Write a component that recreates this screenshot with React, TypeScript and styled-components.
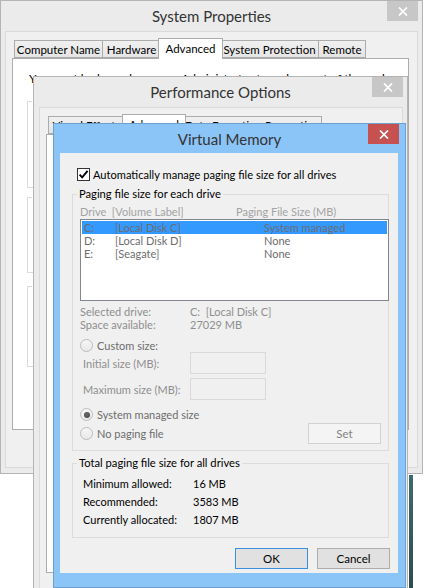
import styled, { createGlobalStyle } from "styled-components";

interface IDrive {
    drive: string;
    label: string;
    size: string;
    selected?: boolean;
}

const drives: IDrive[] = [
    { drive: "C:", label: "[Local Disk C]", size: "System managed", selected: true },
    { drive: "D:", label: "[Local Disk D]", size: "None" },
    { drive: "E:", label: "[Seagate]", size: "None" },
];

const totals = [
    { label: "Minimum allowed:", value: "16 MB" },
    { label: "Recommended:", value: "3583 MB" },
    { label: "Currently allocated:", value: "1807 MB" },
];

const GlobalStyle = createGlobalStyle`
    html, body {
        margin: 0;
        padding: 0;
        background: #ffffff;
    }
    body {
        font-family: Lato, "Liberation Sans", sans-serif;
        font-size: 11px;
        color: #000000;
    }
    * {
        box-sizing: border-box;
    }
`;

const Desktop = styled.div`
    position: relative;
    width: 424px;
    height: 588px;
    overflow: hidden;
    background: #ffffff;
`;

const WallpaperEdge = styled.div`
    position: absolute;
    left: 409px;
    top: 475px;
    bottom: 0;
    width: 4px;
    background: linear-gradient(#3d6a6e, #2a4d52);
`;

const Window = styled.div<{ $left: number; $top: number; $width: number; $height?: number; $active?: boolean }>`
    position: absolute;
    isolation: isolate;
    left: ${(p) => p.$left}px;
    top: ${(p) => p.$top}px;
    width: ${(p) => p.$width}px;
    ${(p) => (p.$height ? `height: ${p.$height}px;` : "")}
    display: flex;
    flex-direction: column;
    background: ${(p) => (p.$active ? "#8bc4f7" : "#ebebeb")};
    border: 1px solid ${(p) => (p.$active ? "#6d9fd0" : "#b4b4b4")};
`;

const TitleBar = styled.div<{ $height: number }>`
    height: ${(p) => p.$height}px;
    flex-shrink: 0;
    display: grid;
    grid-template-columns: 1fr auto 1fr;
    align-items: center;
`;

const Title = styled.div`
    grid-column: 2;
    font-size: 15px;
    color: #333333;
    white-space: nowrap;
`;

const CloseButton = styled.div<{ $active?: boolean; $inset: number }>`
    grid-column: 3;
    justify-self: end;
    align-self: start;
    margin-right: ${(p) => p.$inset}px;
    width: 31px;
    height: 20px;
    display: flex;
    align-items: center;
    justify-content: center;
    background: ${(p) => (p.$active ? "#c75050" : "#c7c7c7")};
`;

const Client = styled.div<{ $margin: string; $bordered?: boolean; $height?: number }>`
    margin: ${(p) => p.$margin};
    ${(p) => (p.$height ? `height: ${p.$height}px;` : "flex: 1;")}
    min-height: 0;
    display: flex;
    flex-direction: column;
    background: #f0f0f0;
    border: ${(p) => (p.$bordered ? "1px solid #dadada" : "none")};
`;

const TabStrip = styled.div<{ $indent: number }>`
    position: relative;
    z-index: 1;
    display: flex;
    align-items: flex-end;
    padding: 6px 0 0 ${(p) => p.$indent}px;
`;

const Tab = styled.div<{ $width: number; $selected?: boolean }>`
    position: relative;
    z-index: ${(p) => (p.$selected ? 2 : 1)};
    width: ${(p) => (p.$selected ? p.$width + 4 : p.$width)}px;
    height: ${(p) => (p.$selected ? 21 : 18)}px;
    margin: 0 ${(p) => (p.$selected ? -3 : -1)}px ${(p) => (p.$selected ? -1 : 0)}px
        ${(p) => (p.$selected ? -2 : 0)}px;
    padding-bottom: ${(p) => (p.$selected ? 2 : 0)}px;
    display: flex;
    align-items: center;
    justify-content: center;
    white-space: nowrap;
    overflow: hidden;
    font-size: 11.5px;
    border: 1px solid #acacac;
    border-bottom: ${(p) => (p.$selected ? "none" : "1px solid #acacac")};
    background: ${(p) => (p.$selected ? "#ffffff" : "linear-gradient(#f0f0f0, #e5e5e5)")};
`;

const TabPage = styled.div<{ $margin: string; $height: number }>`
    margin: ${(p) => p.$margin};
    height: ${(p) => p.$height}px;
    flex-shrink: 0;
    display: flex;
    flex-direction: column;
    background: #ffffff;
    border: 1px solid #acacac;
    overflow: hidden;
`;

const PageText = styled.div`
    padding: 12px 0 0 16px;
    line-height: 15px;
    font-size: 12px;
    white-space: nowrap;
`;

const Fieldset = styled.fieldset<{ $margin: string; $padding?: string }>`
    margin: ${(p) => p.$margin};
    padding: ${(p) => p.$padding || "0"};
    min-inline-size: 0;
    border: 1px solid #dcdcdc;
`;

const Legend = styled.legend`
    margin-left: 4px;
    padding: 0 2px;
    line-height: 14px;
    font-size: 11.2px;
    color: #000000;
    white-space: nowrap;
`;

const Filler = styled.div<{ $height: number }>`
    height: ${(p) => p.$height}px;
`;

const CheckRow = styled.label`
    margin: 15px 0 0 17px;
    height: 13px;
    display: flex;
    align-items: center;
    gap: 3px;
    line-height: 13px;
    font-size: 11.1px;
    white-space: nowrap;
`;

const CheckBox = styled.span`
    width: 13px;
    height: 13px;
    flex-shrink: 0;
    display: flex;
    align-items: center;
    justify-content: center;
    background: #ffffff;
    border: 1px solid #333333;
`;

const HeaderRow = styled.div`
    margin: 4px 0 0 7px;
    display: grid;
    grid-template-columns: 156px 1fr;
    line-height: 13px;
    color: #a3a3a3;
    white-space: nowrap;
`;

const ListBox = styled.div`
    margin: 1px -1px 0 7px;
    height: 82px;
    padding: 1px;
    background: #ffffff;
    border: 1px solid #828790;
`;

const ListRow = styled.div<{ $selected?: boolean }>`
    height: 13px;
    padding-left: 2px;
    display: grid;
    grid-template-columns: 31px 149px 1fr;
    line-height: 13px;
    color: #6d6d6d;
    white-space: nowrap;
    background: ${(p) => (p.$selected ? "#3399ff" : "transparent")};
`;

const InfoBlock = styled.div`
    margin: 4px 0 0 7px;
    display: grid;
    grid-template-columns: 110px 1fr;
    line-height: 13px;
    color: #8e8e8e;
    white-space: nowrap;
`;

const RadioRow = styled.div<{ $top: number; $height?: number }>`
    margin: ${(p) => p.$top}px 7px 0 7px;
    height: ${(p) => p.$height || 13}px;
    display: flex;
    align-items: center;
    gap: 4px;
    color: #6d6d6d;
    white-space: nowrap;
`;

const Radio = styled.span<{ $checked?: boolean }>`
    width: 13px;
    height: 13px;
    flex-shrink: 0;
    border-radius: 50%;
    display: flex;
    align-items: center;
    justify-content: center;
    border: 1px solid #bcbcbc;
    background: linear-gradient(#f6f6f6, #e8e8e8);
    &::after {
        content: "";
        display: ${(p) => (p.$checked ? "block" : "none")};
        width: 6px;
        height: 6px;
        border-radius: 50%;
        background: radial-gradient(circle at 45% 40%, #6a6a6a, #3f3f3f);
    }
`;

const SizeRow = styled.div<{ $top: number }>`
    margin: ${(p) => p.$top}px 0 0 10px;
    height: 22px;
    display: grid;
    grid-template-columns: 107px 76px;
    align-items: center;
    color: #8e8e8e;
    white-space: nowrap;
`;

const SizeInput = styled.div`
    height: 22px;
    background: #f0f0f0;
    border: 1px solid #d9d9d9;
`;

const Spacer = styled.div`
    flex: 1;
`;

const Button = styled.div<{ $disabled?: boolean; $default?: boolean }>`
    width: 73px;
    height: 21px;
    display: flex;
    align-items: center;
    justify-content: center;
    font-size: 11.5px;
    color: ${(p) => (p.$disabled ? "#838383" : "#000000")};
    background: ${(p) => (p.$disabled ? "#f4f4f4" : "#e1e1e1")};
    border: 1px solid ${(p) => (p.$disabled ? "#d2d2d2" : p.$default ? "#3c8fe0" : "#adadad")};
`;

const TotalRow = styled.div`
    height: 18px;
    padding-left: 10px;
    display: grid;
    grid-template-columns: 110px 1fr;
    align-items: center;
    white-space: nowrap;
`;

const ButtonRow = styled.div`
    margin: 10px 8px 0 0;
    display: flex;
    justify-content: flex-end;
    gap: 9px;
`;

function CloseGlyph() {
    return (
        <svg width="10" height="9" viewBox="0 0 10 9" aria-hidden="true">
            <path d="M1 0.5L9 8.5M9 0.5L1 8.5" stroke="#ffffff" strokeWidth="1.7" />
        </svg>
    );
}

function CheckGlyph() {
    return (
        <svg width="11" height="11" viewBox="0 0 11 11" aria-hidden="true">
            <path d="M1.6 5.6L4.2 8.4L9.6 1.8" fill="none" stroke="#000000" strokeWidth="1.9" />
        </svg>
    );
}

function SystemProperties() {
    return (
        <Window $left={0} $top={0} $width={423} $height={474}>
            <TitleBar $height={30}>
                <Title>System Properties</Title>
                <CloseButton $inset={4}>
                    <CloseGlyph />
                </CloseButton>
            </TitleBar>
            <Client $bordered $margin="0 4px 5px 4px">
                <TabStrip $indent={8}>
                    <Tab $width={89}>Computer Name</Tab>
                    <Tab $width={59}>Hardware</Tab>
                    <Tab $width={61} $selected>Advanced</Tab>
                    <Tab $width={99}>System Protection</Tab>
                    <Tab $width={48}>Remote</Tab>
                </TabStrip>
                <TabPage $margin="0 8px 0 6px" $height={372}>
                    <PageText>You must be logged on as an Administrator to make most of these changes.</PageText>
                    <Fieldset $margin="8px 14px 0 14px">
                        <Legend>Performance</Legend>
                        <Filler $height={79} />
                    </Fieldset>
                    <Fieldset $margin="2px 14px 0 14px">
                        <Legend>User Profiles</Legend>
                        <Filler $height={68} />
                    </Fieldset>
                    <Fieldset $margin="6px 14px 0 14px">
                        <Legend>Startup and Recovery</Legend>
                        <Filler $height={73} />
                    </Fieldset>
                </TabPage>
            </Client>
        </Window>
    );
}

function PerformanceOptions() {
    return (
        <Window $left={33} $top={76} $width={375} $height={530}>
            <TitleBar $height={30}>
                <Title>Performance Options</Title>
                <CloseButton $inset={4}>
                    <CloseGlyph />
                </CloseButton>
            </TitleBar>
            <Client $bordered $margin="0 4px 0 5px">
                <TabStrip $indent={8}>
                    <Tab $width={77}>Visual Effects</Tab>
                    <Tab $width={60} $selected>Advanced</Tab>
                    <Tab $width={139}>Data Execution Prevention</Tab>
                </TabStrip>
                <TabPage $margin="0 5px 0 6px" $height={439} />
            </Client>
        </Window>
    );
}

function VirtualMemory() {
    return (
        <Window $left={53} $top={123} $width={353} $active>
            <TitleBar $height={29}>
                <Title>Virtual Memory</Title>
                <CloseButton $active $inset={6}>
                    <CloseGlyph />
                </CloseButton>
            </TitleBar>
            <Client $margin="0 7px 14px 6px" $height={420}>
                <CheckRow>
                    <CheckBox>
                        <CheckGlyph />
                    </CheckBox>
                    Automatically manage paging file size for all drives
                </CheckRow>

                <Fieldset $margin="6px 9px 0 12px" $padding="0 0 6px 0">
                    <Legend>Paging file size for each drive</Legend>
                    <HeaderRow>
                        <span>Drive&nbsp; [Volume Label]</span>
                        <span>Paging File Size (MB)</span>
                    </HeaderRow>
                    <ListBox>
                        {drives.map((d) => (
                            <ListRow key={d.drive} $selected={d.selected}>
                                <span>{d.drive}</span>
                                <span>{d.label}</span>
                                <span>{d.size}</span>
                            </ListRow>
                        ))}
                    </ListBox>
                    <InfoBlock>
                        <span>Selected drive:</span>
                        <span>C:&nbsp; [Local Disk C]</span>
                        <span>Space available:</span>
                        <span>27029 MB</span>
                    </InfoBlock>
                    <RadioRow $top={8}>
                        <Radio />
                        Custom size:
                    </RadioRow>
                    <SizeRow $top={0}>
                        <span>Initial size (MB):</span>
                        <SizeInput />
                    </SizeRow>
                    <SizeRow $top={4}>
                        <span>Maximum size (MB):</span>
                        <SizeInput />
                    </SizeRow>
                    <RadioRow $top={8}>
                        <Radio $checked />
                        System managed size
                    </RadioRow>
                    <RadioRow $top={2} $height={21}>
                        <Radio />
                        No paging file
                        <Spacer />
                        <Button $disabled>Set</Button>
                    </RadioRow>
                </Fieldset>

                <Fieldset $margin="5px 9px 0 12px" $padding="4px 0 9px 0">
                    <Legend>Total paging file size for all drives</Legend>
                    {totals.map((t) => (
                        <TotalRow key={t.label}>
                            <span>{t.label}</span>
                            <span>{t.value}</span>
                        </TotalRow>
                    ))}
                </Fieldset>

                <ButtonRow>
                    <Button $default>OK</Button>
                    <Button>Cancel</Button>
                </ButtonRow>
            </Client>
        </Window>
    );
}

export default function App() {
    return (
        <>
            <GlobalStyle />
            <Desktop>
                <WallpaperEdge />
                <SystemProperties />
                <PerformanceOptions />
                <VirtualMemory />
            </Desktop>
        </>
    );
}
